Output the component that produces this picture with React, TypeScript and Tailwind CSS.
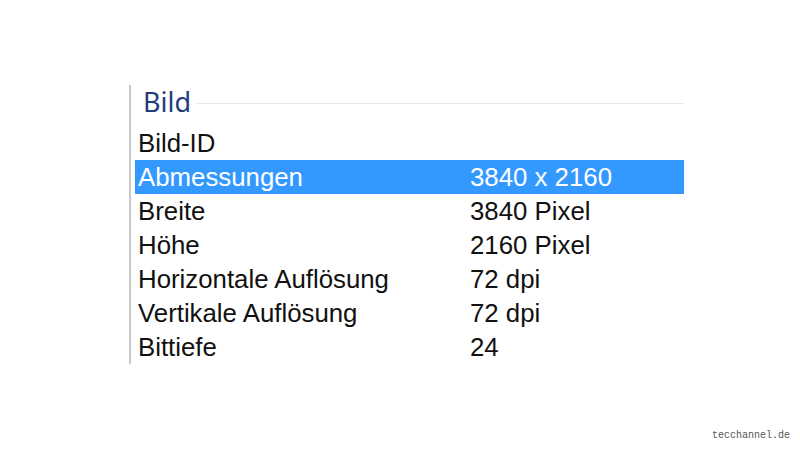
const rows: { label: string; value: string; selected?: boolean }[] = [
  { label: 'Bild-ID', value: '' },
  { label: 'Abmessungen', value: '3840 x 2160', selected: true },
  { label: 'Breite', value: '3840 Pixel' },
  { label: 'Höhe', value: '2160 Pixel' },
  { label: 'Horizontale Auflösung', value: '72 dpi' },
  { label: 'Vertikale Auflösung', value: '72 dpi' },
  { label: 'Bittiefe', value: '24' },
]

export default function App() {
  return (
    <div className="relative w-[800px] h-[450px] bg-white overflow-hidden pt-[85px] pl-[129px]">
      <div className="w-[555px] border-l-2 border-[#c9c9c9] flex flex-col">
        <div className="h-[41px] flex items-center pl-[12px] pb-[8px]">
          <span className="text-[27px] leading-none text-[#1f3d7c] font-['Noto_Sans',sans-serif]">Bild</span>
          <div className="flex-1 h-px bg-[#e6e6e6] ml-[6px] mt-[3px]" />
        </div>
        {rows.map((r) => (
          <div
            key={r.label}
            className={`h-[34px] ml-[4px] flex items-center pl-[3px] pt-[2px] text-[25.8px] leading-none font-['Liberation_Sans',Arial,sans-serif] ${
              r.selected ? 'bg-[#3399ff] text-white' : 'text-[#111]'
            }`}
          >
            <span className="w-[332px] shrink-0">{r.label}</span>
            <span>{r.value}</span>
          </div>
        ))}
      </div>
      <div className="absolute right-[10px] bottom-[9px] text-[10px] leading-none text-[#555] font-['Liberation_Mono',monospace]">
        tecchannel.de
      </div>
    </div>
  )
}
